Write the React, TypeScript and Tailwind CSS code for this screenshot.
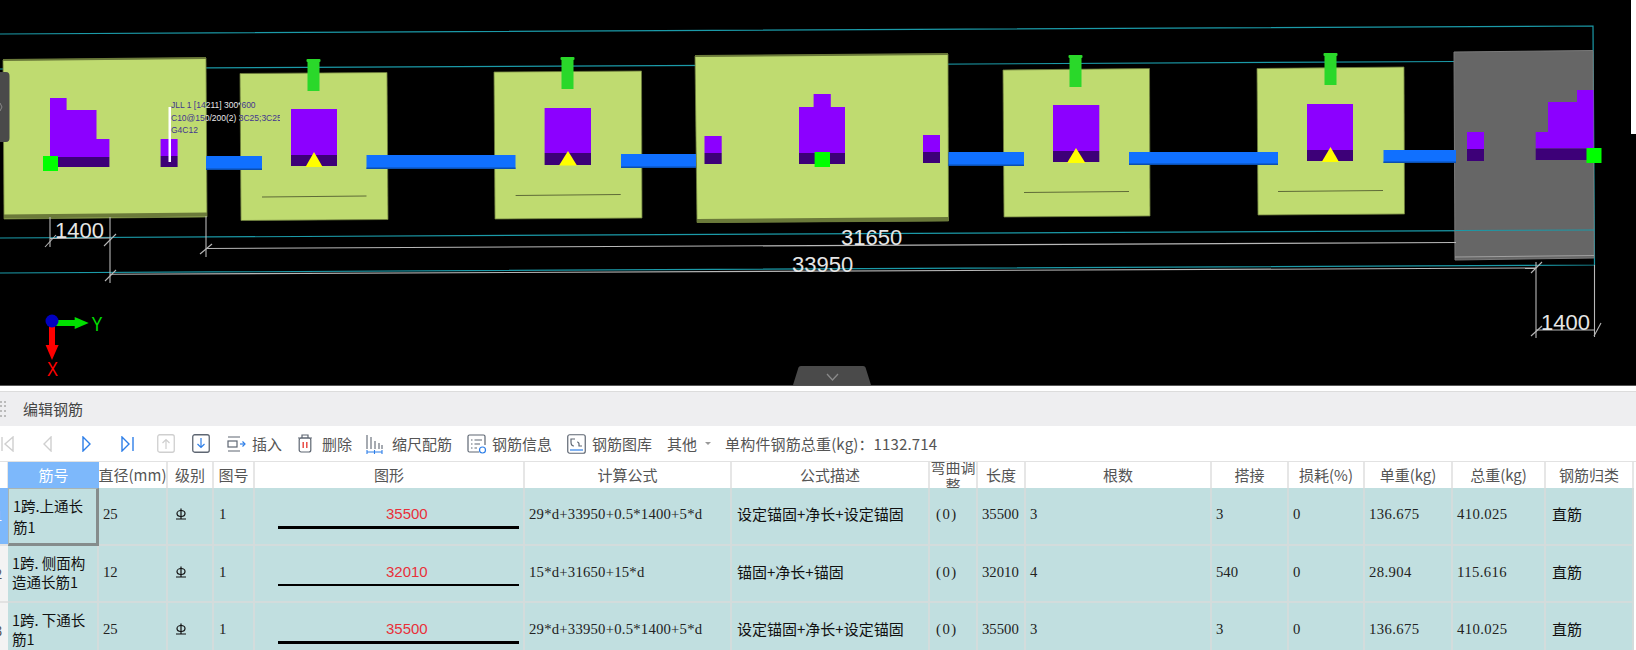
const CN = { fontFamily: '"Noto Sans CJK SC", sans-serif' };
const SIM = { fontFamily: '"Liberation Serif", "Noto Sans CJK SC", serif' };
const SANS = '"Liberation Sans", sans-serif';

const OLIVE = "#bfdb70";
const PURPLE = "#8c00ff";
const DARK = "#3d0078";
const CYAN = "#1b9aa8";
const DIM = "#b8b8b8";
const BLUE = "#1070ff";
const TOP = "#2ad82a";

type Box = [number, number, number, number];

const blocks: { pts: string; fill: string; edge?: string; top?: string }[] = [
  { pts: "3,60 206,58 207,217 4,219", fill: OLIVE, edge: "M4,215.5 L207,213.5", top: "M3,60 L206,58" },
  { pts: "240,73.5 387,72.5 388,219.5 241,220.5", fill: OLIVE },
  { pts: "494,72 641.5,71 642,218 495,219", fill: OLIVE },
  { pts: "695,56 948,54 948.5,221 697,222.5", fill: OLIVE, edge: "M697,220 L948.5,218", top: "M695,56 L948,54" },
  { pts: "1003,70 1149.5,68.5 1150,216 1004,217", fill: OLIVE },
  { pts: "1257,68.5 1404,67 1404.5,214 1258,215", fill: OLIVE },
];

// blue beams between the columns
const beams: Box[] = [
  [206, 156, 56, 14],
  [366.5, 155, 149, 14],
  [621, 154, 75, 14],
  [948.5, 152, 75.5, 14],
  [1129, 152, 149, 13],
  [1383.5, 150, 72.5, 13],
];

const tops = [313.5, 567.5, 1075.5, 1330.5];
const topY = [59, 57, 55, 53];

const lightPurple: Box[] = [
  [50, 98, 16.6, 12],
  [50, 110, 46.5, 29],
  [50, 139, 59.4, 18],
  [160.6, 139, 17, 17],
  [291, 109, 46, 46],
  [544.6, 108, 46.4, 45],
  [813.6, 94, 17.2, 13],
  [799, 107, 46, 46],
  [704.5, 136, 17.2, 17],
  [923, 135, 17, 17],
  [1053, 105, 46.3, 46],
  [1307, 104, 46, 46],
  [1467, 132, 17, 17],
  [1535.7, 132, 57.8, 16.5],
  [1548, 102, 45.5, 30],
  [1577, 90, 16.5, 12],
];

const darkPurple: Box[] = [
  [50, 157, 59.4, 10],
  [160.6, 156, 17, 11],
  [291, 155, 46, 11],
  [544.6, 153, 46.4, 12],
  [799, 153, 46, 11],
  [704.5, 153, 17.2, 11],
  [923, 152, 17, 11],
  [1053, 151, 46.3, 11],
  [1307, 150, 46, 11],
  [1467, 149, 17, 12],
  [1535.7, 148.5, 51.3, 11.5],
];

const triangles = [
  "314,152 305.5,167 322.7,167",
  "568,151 559,165.5 577,165.5",
  "1076,148 1067,163 1085.4,163",
  "1330.5,147 1321.7,162 1339,162",
];

const blockLines = [
  "M262,197 L366.5,196",
  "M515.6,195.5 L620.7,194.5",
  "M1024,192.5 L1129,191.5",
  "M1278,191.5 L1383,190.5",
];

const greenSquares: Box[] = [
  [43, 156, 15, 15],
  [814.6, 152, 15.4, 15],
  [1586.5, 148, 15, 15],
];

const slashes = [
  [45, 247, 56, 235],
  [104, 246, 116, 234],
  [200, 254, 212, 244],
  [105, 281, 116, 270],
  [1531, 273, 1542, 262],
  [1531, 336, 1542, 326],
  [1594, 336, 1601, 323],
];

const dimLines = [
  "M50,217 L50,247",
  "M110,217 L110,283",
  "M50,238.5 L110,238",
  "M206,216 L206,257",
  "M206,248.5 L1456,242.5",
  "M110,274.3 L1536,268",
  "M1536,262 L1536,338",
  "M1594.5,265 L1594.5,337",
  "M1536,330 L1594.5,330",
];

function Annotation({ fill }: { fill: string }) {
  return (
    <g fill={fill} fontSize={8.5} fontFamily={SANS}>
      <text x={171} y={108}>JLL 1 [14211] 300*600</text>
      <text x={171} y={120.5}>C10@150/200(2) 3C25;3C25</text>
      <text x={171} y={133}>G4C12</text>
    </g>
  );
}

function Viewport() {
  return (
    <div className="h-[386px] bg-black border-b border-[#555] shrink-0">
      <svg width={1636} height={385} viewBox="0 0 1636 385" className="block">
        <defs>
          <clipPath id="on-black">
            <rect x={206} y={90} width={34} height={50} />
          </clipPath>
          <clipPath id="on-olive">
            <rect x={160} y={90} width={46} height={50} />
            <rect x={240} y={90} width={40} height={50} />
          </clipPath>
        </defs>

        {/* axis lines */}
        <g stroke={CYAN} strokeWidth={1.2} fill="none">
          <path d="M0,34 L1593,26 L1594.5,265 L0,273" />
          <path d="M0,69 L1456,61.5" />
          <path d="M0,238 L1594,230" />
        </g>

        {/* columns */}
        {blocks.map((b) => (
          <g key={b.pts}>
            <polygon points={b.pts} fill={b.fill} stroke="#6f7f3e" strokeWidth={0.8} />
            {b.edge && <path d={b.edge} stroke="#6b7a3a" strokeWidth={4} transform="translate(0 1)" />}
            {b.top && <path d={b.top} stroke="#6b7a3a" strokeWidth={2} />}
          </g>
        ))}
        <polygon points="1454,52 1593,50.5 1594,258 1455,260" fill="#666666" stroke="#7a7a7a" strokeWidth={1} />
        <path d="M1455,257 L1594,255.5" stroke="#a0a0a0" strokeWidth={1.2} />
        <path d="M1455,230.5 L1594,230" stroke={CYAN} strokeWidth={1.2} />

        {beams.map(([x, y, w, h]) => (
          <g key={x}>
            <rect x={x} y={y} width={w} height={h} fill={BLUE} />
            <rect x={x} y={y + h - 1.5} width={w} height={1.5} fill="#0b4fb0" />
          </g>
        ))}

        {blockLines.map((d) => (
          <path key={d} d={d} stroke="#5f6b38" strokeWidth={1.2} />
        ))}

        {tops.map((cx, i) => (
          <g key={cx} fill={TOP}>
            <rect x={cx - 7} y={topY[i]} width={14} height={3} rx={1} />
            <rect x={cx - 6} y={topY[i] + 2} width={12} height={30} />
          </g>
        ))}

        {lightPurple.map(([x, y, w, h]) => (
          <rect key={`${x}-${y}`} x={x} y={y} width={w} height={h} fill={PURPLE} />
        ))}
        {darkPurple.map(([x, y, w, h]) => (
          <rect key={`${x}-${y}`} x={x} y={y} width={w} height={h} fill={DARK} />
        ))}
        {triangles.map((p) => (
          <polygon key={p} points={p} fill="#ffff00" />
        ))}
        {greenSquares.map(([x, y, w, h]) => (
          <rect key={x} x={x} y={y} width={w} height={h} fill="#00ff00" />
        ))}

        {/* annotation on the first column */}
        <rect x={168.5} y={107} width={2.5} height={55} fill="#ffffff" />
        <g clipPath="url(#on-olive)">
          <Annotation fill="#43358f" />
        </g>
        <g clipPath="url(#on-black)">
          <Annotation fill="#e8e8e8" />
        </g>

        {/* dimensions */}
        <g stroke={DIM} strokeWidth={1.1} fill="none">
          {dimLines.map((d) => (
            <path key={d} d={d} />
          ))}
          {slashes.map(([x1, y1, x2, y2]) => (
            <line key={`${x1}-${y1}`} x1={x1} y1={y1} x2={x2} y2={y2} />
          ))}
        </g>
        <g fill="#e6e6e6" fontSize={22} fontFamily={SANS}>
          <text x={55} y={238}>1400</text>
          <text x={841} y={245}>31650</text>
          <text x={792} y={271.5}>33950</text>
          <text x={1541} y={330}>1400</text>
        </g>

        {/* axis triad */}
        <path d="M52,323 L76,323" stroke="#00e000" strokeWidth={6} />
        <polygon points="74.7,317 88.7,323 74.7,329" fill="#00e000" />
        <path d="M52,325 L52,346" stroke="#ff0000" strokeWidth={6} />
        <polygon points="45.6,345 58.6,345 52,360" fill="#ff0000" />
        <circle cx={52} cy={321} r={6.5} fill="#0000c0" />
        <text x={91.5} y={331} fill="#00e000" fontSize={21} fontFamily={SANS} textLength={11} lengthAdjust="spacingAndGlyphs">Y</text>
        <text x={47} y={376} fill="#ff0000" fontSize={20} fontFamily={SANS} textLength={11} lengthAdjust="spacingAndGlyphs">X</text>

        {/* collapse handles */}
        <path d="M0,72 L6,72 Q9.5,72 9.5,76 L9.5,138 Q9.5,142 6,142 L0,142 Z" fill="#4a4a4a" />
        <path d="M0,103 L2,107 L0,111" stroke="#888" fill="none" />
        <path d="M801,366 L863,366 Q865.5,366 866,369 L871,385 L793,385 L798,369 Q798.5,366 801,366 Z" fill="#4a4a4a" />
        <path d="M827,374 L832.5,380 L838,374" stroke="#8a8a8a" strokeWidth={1.3} fill="none" />

        {/* edge of a panel behind the view */}
        <rect x={1631} y={0} width={5} height={134} fill="#ffffff" />
      </svg>
    </div>
  );
}

function Nav({ dir, bar, color }: { dir: "l" | "r"; bar?: boolean; color: string }) {
  const w = bar ? 13 : 9;
  const pts = dir === "l" ? `${w - 1},1 ${bar ? 4 : 1},8 ${w - 1},15` : `1,1 8,8 1,15`;
  return (
    <svg width={w} height={16} viewBox={`0 0 ${w} 16`} fill="none" stroke={color} strokeWidth={1.4}>
      <polygon points={pts} />
      {bar && dir === "l" && <path d="M1,1 L1,15" />}
      {bar && dir === "r" && <path d="M12,1 L12,15" />}
    </svg>
  );
}

function MoveBox({ down }: { down?: boolean }) {
  return (
    <svg width={18} height={19} viewBox="0 0 18 19" fill="none">
      <rect x={0.75} y={0.75} width={16.5} height={17.5} rx={2} stroke={down ? "#5e6672" : "#cfcfcf"} strokeWidth={1.3} />
      <path
        d={down ? "M9,4 L9,13 M5.5,10 L9,13.5 L12.5,10" : "M9,15 L9,6 M5.5,9 L9,5.5 L12.5,9"}
        stroke={down ? "#2e7fe8" : "#cfcfcf"}
        strokeWidth={1.2}
      />
    </svg>
  );
}

function InsertIcon() {
  return (
    <svg width={19} height={16} viewBox="0 0 19 16" fill="none" stroke="#5e6672" strokeWidth={1.2}>
      <path d="M1,1 L13,1 M1,15 L13,15" />
      <rect x={1} y={5} width={9} height={6} />
      <path d="M13,8 L18,8" stroke="#2e7fe8" />
      <path d="M15.5,5.5 L18,8 L15.5,10.5" stroke="#2e7fe8" />
    </svg>
  );
}

function TrashIcon() {
  return (
    <svg width={16} height={19} viewBox="0 0 16 19" fill="none" stroke="#5e6672" strokeWidth={1.2}>
      <path d="M1,4 L15,4 M5,4 L5,1 L11,1 L11,4" />
      <rect x={2.2} y={4} width={11.6} height={14} rx={2} />
      <path d="M6.2,8 L6.2,14 M9.8,8 L9.8,14" stroke="#e8403a" strokeWidth={1.4} />
    </svg>
  );
}

function ScaleIcon() {
  return (
    <svg width={17} height={20} viewBox="0 0 17 20" fill="none" stroke="#5e6672" strokeWidth={1.1}>
      <path d="M1,1 L1,15 M5,3 L5,15 M9,7 L9,15 M13,9 L13,15 M16,11 L16,15" />
      <path d="M0.5,18 L16.5,18 M1,16 L1,20 M8.5,16 L8.5,20 M16,16 L16,20" stroke="#2e7fe8" />
    </svg>
  );
}

function InfoIcon() {
  return (
    <svg width={20} height={20} viewBox="0 0 20 20" fill="none" stroke="#5e6672" strokeWidth={1.2}>
      <path d="M12,18 L2.5,18 Q1,18 1,16.5 L1,2.5 Q1,1 2.5,1 L16.5,1 Q18,1 18,2.5 L18,11" />
      <path d="M4,6 L5.5,6 M7.5,6 L15,6 M4,10 L5.5,10 M7.5,10 L13,10 M4,14 L5.5,14 M7.5,14 L10,14" />
      <circle cx={15.5} cy={16} r={3} stroke="#2e7fe8" />
    </svg>
  );
}

function LibraryIcon() {
  return (
    <svg width={19} height={20} viewBox="0 0 19 20" fill="none" stroke="#5e6672" strokeWidth={1.2}>
      <rect x={0.75} y={0.75} width={17.5} height={18.5} rx={2} />
      <path d="M4,8 L4,5 L8,5 M4,8 Q4,12 7,12 M10,8 Q12,8 12,10 L12,12 L15,12" />
      <path d="M3,16 L16,16" stroke="#2e7fe8" />
    </svg>
  );
}

function Toolbar() {
  const label = "text-[15px] leading-none text-[#555] whitespace-nowrap";
  return (
    <div className="h-[35px] flex items-center bg-white shrink-0" style={CN}>
      <div className="ml-[1px] flex"><Nav dir="l" bar color="#cfcfcf" /></div>
      <div className="ml-[29px] flex"><Nav dir="l" color="#cfcfcf" /></div>
      <div className="ml-[30px] flex"><Nav dir="r" color="#2e7fe8" /></div>
      <div className="ml-[30px] flex"><Nav dir="r" bar color="#2e7fe8" /></div>
      <div className="ml-[23px] flex"><MoveBox /></div>
      <div className="ml-[17px] flex"><MoveBox down /></div>
      <div className="ml-[17px] flex"><InsertIcon /></div>
      <span className={`ml-[6px] ${label}`}>插入</span>
      <div className="ml-[15px] flex"><TrashIcon /></div>
      <span className={`ml-[9px] ${label}`}>删除</span>
      <div className="ml-[14px] flex"><ScaleIcon /></div>
      <span className={`ml-[9px] ${label}`}>缩尺配筋</span>
      <div className="ml-[15px] flex"><InfoIcon /></div>
      <span className={`ml-[5px] ${label}`}>钢筋信息</span>
      <div className="ml-[15px] flex"><LibraryIcon /></div>
      <span className={`ml-[6px] ${label}`}>钢筋图库</span>
      <span className={`ml-[15px] ${label}`}>其他</span>
      <div className="ml-[8px] w-0 h-0 border-x-[3px] border-x-transparent border-t-[3px] border-t-[#999]" />
      <span className={`ml-[14px] tracking-[0.15px] ${label}`}>单构件钢筋总重(kg)：1132.714</span>
    </div>
  );
}

const cols =
  "grid w-[1634px] grid-cols-[8px_91px_69px_46px_41px_270px_207px_198px_48px_48px_186px_77px_76px_88px_93px_88px]";

const headers = ["直径(mm)", "级别", "图号", "图形", "计算公式", "公式描述", "弯曲调整", "长度", "根数", "搭接", "损耗(%)", "单重(kg)", "总重(kg)", "钢筋归类"];

const rows = [
  { no: "1", name: ["1跨.上通长", "筋1"], dia: "25", shape: "35500", formula: "29*d+33950+0.5*1400+5*d", desc: "设定锚固+净长+设定锚固", len: "35500", count: "3", lap: "3", loss: "0", unit: "136.675", total: "410.025" },
  { no: "2", name: ["1跨. 侧面构", "造通长筋1"], dia: "12", shape: "32010", formula: "15*d+31650+15*d", desc: "锚固+净长+锚固", len: "32010", count: "4", lap: "540", loss: "0", unit: "28.904", total: "115.616" },
  { no: "3", name: ["1跨. 下通长", "筋1"], dia: "25", shape: "35500", formula: "29*d+33950+0.5*1400+5*d", desc: "设定锚固+净长+设定锚固", len: "35500", count: "3", lap: "3", loss: "0", unit: "136.675", total: "410.025" },
];

function GradeMark() {
  return (
    <svg width={12} height={12} viewBox="0 0 12 12" fill="none" stroke="#111" strokeWidth={1.2}>
      <ellipse cx={6} cy={5.5} rx={4} ry={3} />
      <path d="M6,0.5 L6,11 M1,11 L11,11" />
    </svg>
  );
}

function Table() {
  const head = "h-[26px] flex items-center justify-center border-r-2 border-[#e6e6e6] text-[15px] text-[#555] whitespace-nowrap overflow-hidden bg-white";
  const cell = "h-[57.5px] flex items-center pb-[3px] pl-[4px] border-r-2 border-b-2 border-[#d3dcdc] bg-[#c1dfe0] overflow-hidden";
  const num = "text-[14.7px] text-[#222] whitespace-nowrap";
  const cjk = "text-[15px] text-[#111] whitespace-nowrap";
  return (
    <div className="flex-1 bg-white border-t border-[#e2e2e2] overflow-hidden" style={CN}>
      <div className={cols}>
        <div className="h-[26px] bg-white border-r border-[#e6e6e6]" />
        <div className="h-[26px] flex items-center justify-center bg-[#7db8fb] text-white text-[15px]">筋号</div>
        {headers.map((h) =>
          h === "弯曲调整" ? (
            <div key={h} className="h-[26px] flex items-center justify-center border-r-2 border-[#e6e6e6] overflow-hidden bg-white">
              <div className="text-[15px] leading-[18px] text-[#555] text-center w-[46px] mt-[1px] shrink-0">{h}</div>
            </div>
          ) : (
            <div key={h} className={head}>{h}</div>
          ),
        )}
        {rows.map((r, i) => (
          <div key={r.no} className="contents">
            <div className={`h-[57.5px] flex items-center overflow-hidden border-b-2 border-[#e2e2e2] text-[13px] ${i === 0 ? "bg-[#7db8fb] text-white" : "bg-[#f3f3f3] text-[#555]"}`}>
              <span className="-ml-[5px]">{r.no}</span>
            </div>
            <div
              className={`h-[57.5px] flex flex-col justify-center pl-[4px] text-[14.5px] text-[#111] bg-[#c1dfe0] whitespace-nowrap ${
                i === 0
                  ? "leading-[21px] border-t border-l border-[#a8b4b4] border-r-[3px] border-b-[3px] border-r-[#858c8c] border-b-[#858c8c]"
                  : "leading-[19px] border-r-2 border-b-2 border-[#d3dcdc] pb-[3px]"
              }`}
            >
              {r.name.map((n) => (
                <div key={n}>{n}</div>
              ))}
            </div>
            <div className={cell}><span className={num} style={SIM}>{r.dia}</span></div>
            <div className={`${cell} pl-[7px]`}><GradeMark /></div>
            <div className={`${cell} pl-[5px]`}><span className={num} style={SIM}>1</span></div>
            <div className="h-[57.5px] flex flex-col border-r-2 border-b-2 border-[#d3dcdc] bg-[#c1dfe0] overflow-hidden">
              <div className="ml-[131px] mt-[16px] text-[15px] leading-[20px] text-[#e8303a]" style={{ fontFamily: SANS }}>{r.shape}</div>
              <div className="ml-[23px] mt-[2px] w-[241px] h-[2.5px] bg-black" />
            </div>
            <div className={cell}><span className={`${num} tracking-[0.23px]`} style={SIM}>{r.formula}</span></div>
            <div className={`${cell} pl-[5px]`}><span className={cjk}>{r.desc}</span></div>
            <div className={`${cell} pl-[6px]`}><span className={`${num} tracking-[1.5px]`} style={SIM}>(0)</span></div>
            <div className={`${cell} pl-[4px]`}><span className={num} style={SIM}>{r.len}</span></div>
            <div className={cell}><span className={num} style={SIM}>{r.count}</span></div>
            <div className={cell}><span className={num} style={SIM}>{r.lap}</span></div>
            <div className={cell}><span className={num} style={SIM}>{r.loss}</span></div>
            <div className={`${cell} pl-[3px]`}><span className={`${num} tracking-[0.4px]`} style={SIM}>{r.unit}</span></div>
            <div className={cell}><span className={`${num} tracking-[0.4px]`} style={SIM}>{r.total}</span></div>
            <div className={`${cell} pl-[6px]`}><span className={cjk}>直筋</span></div>
          </div>
        ))}
      </div>
    </div>
  );
}

export default function App() {
  return (
    <div className="w-[1636px] h-[650px] flex flex-col overflow-hidden bg-white">
      <Viewport />
      {/* docked panel */}
      <div className="mt-[5px] h-[35px] shrink-0 flex items-center bg-[#eeeef0] border-t border-[#dcdcdc]" style={CN}>
        <div className="w-[6px] h-[17px] grid grid-cols-2 gap-y-[2px] gap-x-[1px]">
          {[0, 1, 2, 3, 4, 5, 6, 7].map((d) => (
            <div key={d} className="w-[2px] h-[2px] bg-[#bbb]" />
          ))}
        </div>
        <span className="ml-[17px] text-[15px] text-[#444]">编辑钢筋</span>
      </div>
      <Toolbar />
      <Table />
    </div>
  );
}
